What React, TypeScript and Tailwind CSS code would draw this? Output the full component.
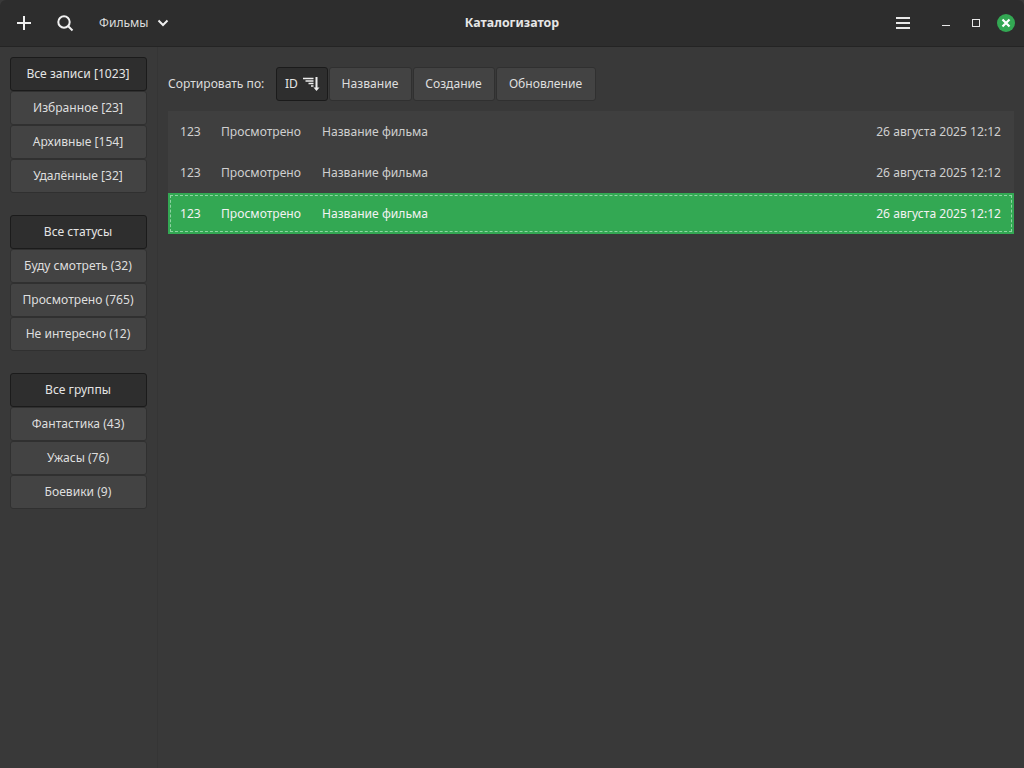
const FONT = "font-['Noto_Sans',sans-serif]";

function SideButton({ label, active }: { label: string; active?: boolean }) {
  return (
    <button
      className={`h-[34px] w-full rounded-[3px] border pr-px text-[12.1px] ${
        active
          ? "border-[#1b1b1b] bg-[#2e2e2e] text-[#e4e4e4]"
          : "border-[#303030] bg-[#434343] text-[#dedede]"
      }`}
    >
      {label}
    </button>
  );
}

function SideGroup({ items }: { items: string[] }) {
  return (
    <div className="flex flex-col">
      {items.map((item, i) => (
        <SideButton key={item} label={item} active={i === 0} />
      ))}
    </div>
  );
}

function SortIcon() {
  return (
    <svg width="17" height="16" viewBox="0 0 17 16" fill="none" stroke="#eeeeee">
      <path d="M0 2.5h10.5M2.5 5h8M5.5 7.5h5M8 10h2.5" strokeWidth="1.4" />
      <path d="M13.5 1v11" strokeWidth="2" />
      <path d="M10.5 11.5h6l-3 3.5z" fill="#eeeeee" stroke="none" />
    </svg>
  );
}

function Row({ selected }: { selected?: boolean }) {
  return (
    <div
      className={`relative flex h-[41px] items-center px-3 pt-px text-[12.1px] ${
        selected ? "bg-[#33a853] text-[#f2f2f2]" : "text-[#cfcfcf]"
      }`}
    >
      {selected && (
        <div className="absolute inset-[2px] border border-dashed border-[#8fd3a2]" />
      )}
      <span className="w-[41px]">123</span>
      <span className="w-[101px]">Просмотрено</span>
      <span className="flex-1">Название фильма</span>
      <span className="mr-px">26 августа 2025 12:12</span>
    </div>
  );
}

export default function App() {
  return (
    <div className={`flex h-[768px] w-[1024px] flex-col overflow-hidden bg-[#393939] ${FONT}`}>
      <header className="relative flex h-[47px] shrink-0 items-center rounded-t-[6px] border-b border-[#242424] bg-[#2d2d2d] text-[#e6e6e6]">
        <svg className="ml-[16px]" width="16" height="16" viewBox="0 0 16 16" stroke="#f0f0f0" strokeWidth="2">
          <path d="M8 1v14M1 8h14" />
        </svg>
        <svg className="ml-[24px]" width="18" height="18" viewBox="0 0 18 18" fill="none" stroke="#f0f0f0" strokeWidth="2">
          <circle cx="8" cy="8" r="5.7" />
          <path d="M12 12l4.5 4.5" />
        </svg>
        <span className="ml-[25px] text-[12.1px] text-[#dcdcdc]">Фильмы</span>
        <svg className="ml-[8px]" width="12" height="12" viewBox="0 0 12 12" fill="none" stroke="#eeeeee" strokeWidth="2">
          <path d="M1.5 3.5L6 8l4.5-4.5" />
        </svg>
        <span className="absolute left-0 right-0 text-center text-[12.4px] font-bold text-[#e6e6e6]">
          Каталогизатор
        </span>
        <div className="ml-auto flex items-center">
          <div className="flex flex-col gap-[3px]">
            <div className="h-[2px] w-[14px] bg-[#e8e8e8]" />
            <div className="h-[2px] w-[14px] bg-[#e8e8e8]" />
            <div className="h-[2px] w-[14px] bg-[#e8e8e8]" />
          </div>
          <div className="ml-[32px] mt-[5px] h-px w-[8px] bg-[#e8e8e8]" />
          <div className="ml-[22px] h-[8px] w-[8px] border border-[#e8e8e8]" />
          <div className="ml-[17px] mr-[9px] flex h-[18px] w-[18px] items-center justify-center rounded-full bg-[#33a853]">
            <svg width="10" height="10" viewBox="0 0 10 10" stroke="#ffffff" strokeWidth="2.2">
              <path d="M1.5 1.5l7 7M8.5 1.5l-7 7" />
            </svg>
          </div>
        </div>
      </header>
      <div className="flex flex-1">
        <aside className="flex w-[158px] shrink-0 flex-col gap-[22px] border-r border-[#353535] bg-[#393939] pl-[10px] pr-[10px] pt-[10px]">
          <SideGroup items={["Все записи [1023]", "Избранное [23]", "Архивные [154]", "Удалённые [32]"]} />
          <SideGroup items={["Все статусы", "Буду смотреть (32)", "Просмотрено (765)", "Не интересно (12)"]} />
          <SideGroup items={["Все группы", "Фантастика (43)", "Ужасы (76)", "Боевики (9)"]} />
        </aside>
        <main className="flex flex-1 flex-col px-[10px] pt-[20px]">
          <div className="flex h-[34px] items-center gap-px text-[12.1px]">
            <span className="w-[107px] text-[#dcdcdc]">Сортировать по:</span>
            <button className="flex h-[34px] w-[52px] items-center gap-[5px] rounded-[3px] border border-[#1b1b1b] bg-[#2e2e2e] pl-[8px] text-[#e4e4e4]">
              ID
              <SortIcon />
            </button>
            <button className="h-[34px] w-[83px] rounded-[3px] border border-[#303030] bg-[#434343] pr-px text-[#dedede]">Название</button>
            <button className="h-[34px] w-[82px] rounded-[3px] border border-[#303030] bg-[#434343] pr-px text-[#dedede]">Создание</button>
            <button className="h-[34px] w-[100px] rounded-[3px] border border-[#303030] bg-[#434343] pr-px text-[#dedede]">Обновление</button>
          </div>
          <div className="mt-[10px] bg-[#3f3f3f]">
            <Row />
            <Row />
            <Row selected />
          </div>
        </main>
      </div>
    </div>
  );
}
